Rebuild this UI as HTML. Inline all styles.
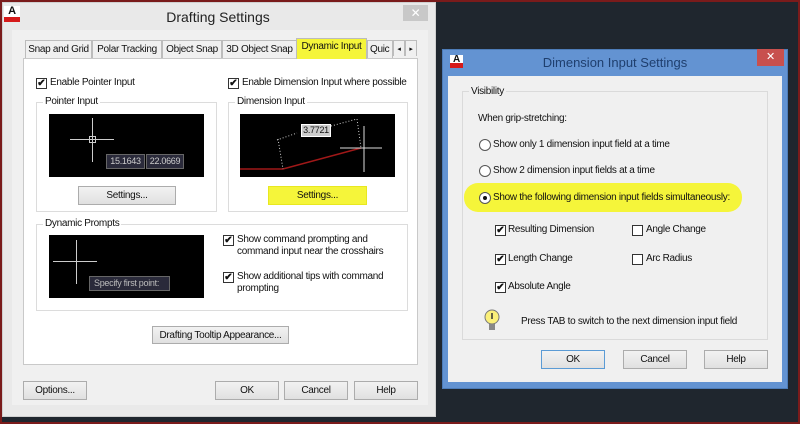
<!DOCTYPE html>
<html><head><meta charset="utf-8"><style>
*{margin:0;padding:0;box-sizing:border-box}
body{width:800px;height:424px;background:#1f262e;position:relative;overflow:hidden;font-family:"Liberation Sans",sans-serif;font-size:10px;letter-spacing:-0.3px;color:#111;white-space:nowrap}
.a{position:absolute}
.btn{position:absolute;background:linear-gradient(#f2f2f2,#e0e0e0);border:1px solid #acacac;text-align:center;line-height:17px}
.blk{position:absolute;background:#000}
.grp{position:absolute;border:1px solid #dcdcdc}
.gl{position:absolute;top:-7px;left:6px;padding:0 2px;background:#fff}
.cb{position:absolute;width:11px;height:11px;border:1px solid #333;background:#fff;font-size:10px;line-height:9px;text-align:center;font-weight:bold;letter-spacing:0}
.rb{position:absolute;width:12px;height:12px;border:1px solid #555;border-radius:50%;background:#fff}
.t{position:absolute}
.tab{position:absolute;top:40px;height:19px;border:1px solid #bcbcbc;border-bottom:none;background:#f0f0f0;line-height:17px;text-align:center;overflow:hidden}
</style></head><body>
<div class="a" style="left:0;top:0;width:800px;height:424px;border:2px solid #7a1b1b"></div>

<!-- Left dialog -->
<div class="a" style="left:2px;top:2px;width:434px;height:415px;background:#e9e9e9;border:1px solid #d0d0d0"></div>
<div class="a" style="left:4px;top:6px;width:16px;height:16px;background:#fff;border-bottom:5px solid #d51a1a;font-size:11px;font-weight:bold;text-align:center;line-height:11px">A</div>
<div class="t" style="left:0;width:436px;top:9px;text-align:center;font-size:14px;letter-spacing:0;color:#222">Drafting Settings</div>
<div class="a" style="left:403px;top:5px;width:25px;height:16px;background:#c8c8c8;color:#fff;text-align:center;line-height:16px;font-size:12px">✕</div>
<div class="a" style="left:12px;top:30px;width:416px;height:375px;background:#f0f0f0"></div>

<div class="tab" style="left:25px;width:67px">Snap and Grid</div>
<div class="tab" style="left:92px;width:70px">Polar Tracking</div>
<div class="tab" style="left:162px;width:60px">Object Snap</div>
<div class="tab" style="left:222px;width:75px">3D Object Snap</div>
<div class="tab" style="left:367px;width:26px;text-align:left;padding-left:2px">Quic</div>
<div class="tab" style="left:393px;width:12px;height:16px;top:40px;font-size:7px">◂</div>
<div class="tab" style="left:405px;width:12px;height:16px;top:40px;font-size:7px">▸</div>
<div class="a" style="left:23px;top:58px;width:395px;height:307px;background:#fff;border:1px solid #c9c9c9"></div>
<div class="tab" style="left:296px;top:38px;width:71px;height:21px;background:#f5f53a;border-color:#bcbcbc;line-height:15px;z-index:2">Dynamic Input</div>

<div class="cb" style="left:36px;top:78px">✔</div><div class="t" style="left:50px;top:77px">Enable Pointer Input</div>
<div class="cb" style="left:228px;top:78px">✔</div><div class="t" style="left:242px;top:77px">Enable Dimension Input where possible</div>

<div class="grp" style="left:36px;top:102px;width:181px;height:110px"><span class="gl">Pointer Input</span></div>
<div class="blk" style="left:49px;top:114px;width:155px;height:63px"></div>
<div class="a" style="left:70px;top:139px;width:44px;height:1px;background:#ccc"></div>
<div class="a" style="left:92px;top:118px;width:1px;height:44px;background:#ccc"></div>
<div class="a" style="left:89px;top:136px;width:7px;height:7px;border:1px solid #ccc"></div>
<div class="a" style="left:106px;top:154px;width:39px;height:15px;background:#2a2a3a;border:1px solid #666;color:#ccc;font-size:9px;line-height:13px;text-align:center">15.1643</div>
<div class="a" style="left:146px;top:154px;width:38px;height:15px;background:#2a2a3a;border:1px solid #666;color:#ccc;font-size:9px;line-height:13px;text-align:center">22.0669</div>
<div class="btn" style="left:78px;top:186px;width:98px;height:19px">Settings...</div>

<div class="grp" style="left:228px;top:102px;width:180px;height:110px"><span class="gl">Dimension Input</span></div>
<div class="blk" style="left:240px;top:114px;width:155px;height:63px"></div>
<svg class="a" style="left:240px;top:114px" width="155" height="63">
<polyline points="0,55 43,55 121,34" fill="none" stroke="#a01818" stroke-width="1.5"/>
<polyline points="38,25 43,55" fill="none" stroke="#ccc" stroke-dasharray="1,2"/>
<polyline points="37,26 57,19" fill="none" stroke="#ccc" stroke-dasharray="1,2"/>
<polyline points="91,12 117,5 121,34" fill="none" stroke="#ccc" stroke-dasharray="1,2"/>
<line x1="100" y1="34" x2="142" y2="34" stroke="#ddd"/><line x1="124" y1="12" x2="124" y2="58" stroke="#ddd"/>
</svg>
<div class="a" style="left:301px;top:124px;width:30px;height:13px;background:#ccc;border:1px solid #fff;font-size:9px;line-height:11px;text-align:center">3.7721</div>
<div class="btn" style="left:268px;top:186px;width:99px;height:19px;background:#f5f53a;border-color:#e8e820">Settings...</div>

<div class="grp" style="left:36px;top:224px;width:372px;height:87px"><span class="gl">Dynamic Prompts</span></div>
<div class="blk" style="left:49px;top:235px;width:155px;height:63px"></div>
<div class="a" style="left:53px;top:261px;width:44px;height:1px;background:#ccc"></div>
<div class="a" style="left:76px;top:240px;width:1px;height:44px;background:#ccc"></div>
<div class="a" style="left:89px;top:276px;width:81px;height:15px;background:#2a2a3a;border:1px solid #666;color:#bbb;font-size:9px;line-height:13px;padding-left:4px">Specify first point:</div>
<div class="cb" style="left:223px;top:235px">✔</div><div class="t" style="left:237px;top:234px;line-height:12px">Show command prompting and<br>command input near the crosshairs</div>
<div class="cb" style="left:223px;top:272px">✔</div><div class="t" style="left:237px;top:271px;line-height:12px">Show additional tips with command<br>prompting</div>

<div class="btn" style="left:152px;top:326px;width:137px;height:18px">Drafting Tooltip Appearance...</div>
<div class="btn" style="left:23px;top:381px;width:64px;height:19px">Options...</div>
<div class="btn" style="left:215px;top:381px;width:64px;height:19px">OK</div>
<div class="btn" style="left:284px;top:381px;width:64px;height:19px">Cancel</div>
<div class="btn" style="left:354px;top:381px;width:64px;height:19px">Help</div>

<!-- Right dialog -->
<div class="a" style="left:442px;top:49px;width:346px;height:340px;background:#6393d2;border:1px solid #4d7cb8"></div>
<div class="a" style="left:450px;top:55px;width:13px;height:13px;background:#fff;border-bottom:5px solid #d51a1a;font-size:10px;font-weight:bold;text-align:center;line-height:9px">A</div>
<div class="t" style="left:442px;width:346px;top:55px;text-align:center;font-size:13px;letter-spacing:0;color:#1f3f6e">Dimension Input Settings</div>
<div class="a" style="left:757px;top:49px;width:27px;height:17px;background:#c8504e;color:#fff;text-align:center;line-height:17px;font-size:11px">✕</div>
<div class="a" style="left:448px;top:76px;width:334px;height:306px;background:#f0f0f0"></div>
<div class="grp" style="left:462px;top:91px;width:306px;height:249px;border-color:#dadada"><span class="gl" style="background:#f0f0f0;left:6px;top:-6px">Visibility</span></div>
<div class="t" style="left:478px;top:113px">When grip-stretching:</div>
<div class="rb" style="left:479px;top:139px"></div><div class="t" style="left:493px;top:139px">Show only 1 dimension input field at a time</div>
<div class="rb" style="left:479px;top:165px"></div><div class="t" style="left:493px;top:165px">Show 2 dimension input fields at a time</div>
<div class="a" style="left:464px;top:183px;width:278px;height:29px;background:#f5f53a;border-radius:14px/14px"></div>
<div class="rb" style="left:479px;top:192px"></div><div class="a" style="left:483px;top:196px;width:4px;height:4px;border-radius:50%;background:#111"></div>
<div class="t" style="left:493px;top:192px">Show the following dimension input fields simultaneously:</div>
<div class="cb" style="left:495px;top:225px">✔</div><div class="t" style="left:508px;top:224px">Resulting Dimension</div>
<div class="cb" style="left:495px;top:254px">✔</div><div class="t" style="left:508px;top:253px">Length Change</div>
<div class="cb" style="left:495px;top:282px">✔</div><div class="t" style="left:508px;top:281px">Absolute Angle</div>
<div class="cb" style="left:632px;top:225px"></div><div class="t" style="left:646px;top:224px">Angle Change</div>
<div class="cb" style="left:632px;top:254px"></div><div class="t" style="left:646px;top:253px">Arc Radius</div>
<svg class="a" style="left:484px;top:309px" width="16" height="24"><circle cx="8" cy="8" r="7" fill="#fbf07a" stroke="#777"/><rect x="5" y="15" width="6" height="6" fill="#888"/><line x1="8" y1="4" x2="8" y2="10" stroke="#333" stroke-width="1.5"/></svg>
<div class="t" style="left:521px;top:316px">Press TAB to switch to the next dimension input field</div>
<div class="btn" style="left:541px;top:350px;width:64px;height:19px;border-color:#5b9bd5">OK</div>
<div class="btn" style="left:623px;top:350px;width:64px;height:19px">Cancel</div>
<div class="btn" style="left:704px;top:350px;width:64px;height:19px">Help</div>
</body></html>
